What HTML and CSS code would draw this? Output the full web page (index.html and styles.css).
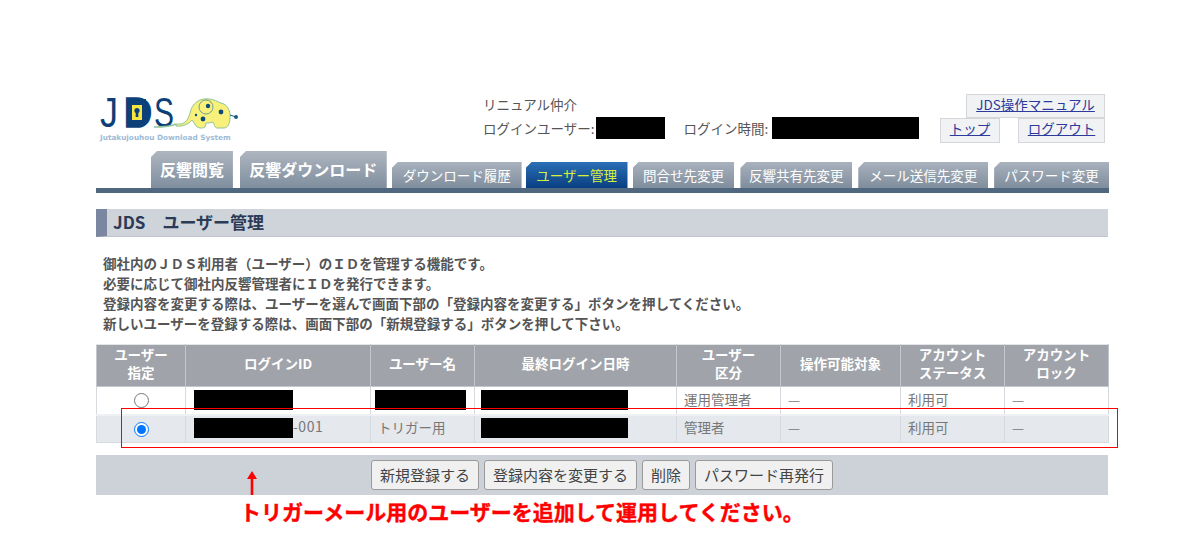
FILE: index.html
```html
<!DOCTYPE html>
<html lang="ja">
<head>
<meta charset="utf-8">
<title>JDS ユーザー管理</title>
<link rel="stylesheet" href="styles.css">
</head>
<body>
<div class="page">
  <header class="header">
    <div class="logo">
      <svg class="logo-mark" width="142" height="54" viewBox="0 -6 142 54">
        <text class="logo-thin" x="2" y="34" textLength="18" lengthAdjust="spacingAndGlyphs">J</text>
        <rect x="30" y="6" width="18" height="26" fill="#0d3f78"/>
        <text class="logo-bold" x="26" y="34" textLength="28" lengthAdjust="spacingAndGlyphs">D</text>
        <rect x="34" y="12" width="10" height="15" fill="#f5e642"/>
        <circle cx="39" cy="17.500" r="2.600" fill="#0d3f78"/>
        <rect x="37.700" y="17.500" width="2.600" height="6.500" fill="#0d3f78"/>
        <text class="logo-thin" x="56" y="34" textLength="20" lengthAdjust="spacingAndGlyphs">S</text>
        <path d="M56 34C66 34 74 33 78 31" fill="none" stroke="#8fc49c" stroke-width="1.500"/>
        <path d="M78 31C86 32 90 28 92 20C94 10 102 5 110 6C116 6 120 9 123 10C129 11 133 18 132 25C132 30 130 35 126 35L119 35C117 35 116 31 115 29C112 30 110 30 108 30L107 34C104 36 100 35 98 33C96 30 95 28 94 27C91 31 84 34 78 33Z" fill="#f7f07a" stroke="#8fc49c"/>
        <circle cx="108" cy="14" r="7" fill="none" stroke="#4f8a9a" stroke-width=".8"/>
        <path d="M132 22L138 24" stroke="#1d5a86" stroke-width="1"/>
        <circle cx="110" cy="13" r="2.200" fill="#0d4a78"/>
        <circle cx="123" cy="19" r="2.400" fill="#0d4a78"/>
        <circle cx="105" cy="26" r="2.400" fill="#0d4a78"/>
        <circle cx="98" cy="22" r="1.200" fill="#0d4a78"/>
        <circle cx="138" cy="24" r="2" fill="#1d5a86"/>
      </svg>
      <div class="logo-caption">Jutakujouhou Download System</div>
    </div>
    <div class="info">
      <div class="info-line">リニュアル仲介</div>
      <div class="info-line info-user">
        <span>ログインユーザー:</span><span class="mask mask-user"></span>
        <span class="info-time">ログイン時間:</span><span class="mask mask-time"></span>
      </div>
    </div>
    <nav class="links">
      <a class="link link-manual" href="#">JDS操作マニュアル</a>
      <div class="links-row">
        <a class="link link-top" href="#">トップ</a>
        <a class="link link-logout" href="#">ログアウト</a>
      </div>
    </nav>
  </header>

  <nav class="tabs">
    <a class="tab tab-big tab-w82" href="#">反響閲覧</a>
    <a class="tab tab-big tab-w147" href="#">反響ダウンロード</a>
    <a class="tab tab-w130" href="#">ダウンロード履歴</a>
    <a class="tab tab-w102 tab-active" href="#">ユーザー管理</a>
    <a class="tab tab-w102" href="#">問合せ先変更</a>
    <a class="tab tab-w112 tab-shift" href="#">反響共有先変更</a>
    <a class="tab tab-w130 tab-shift" href="#">メール送信先変更</a>
    <a class="tab tab-w115 tab-shift" href="#">パスワード変更</a>
  </nav>
  <div class="tab-rule"></div>

  <h1 class="title">JDS　ユーザー管理</h1>

  <div class="lead">
    <p>御社内のＪＤＳ利用者（ユーザー）のＩＤを管理する機能です。</p>
    <p>必要に応じて御社内反響管理者にＩＤを発行できます。</p>
    <p>登録内容を変更する際は、ユーザーを選んで画面下部の「登録内容を変更する」ボタンを押してください。</p>
    <p>新しいユーザーを登録する際は、画面下部の「新規登録する」ボタンを押して下さい。</p>
  </div>

  <table class="users">
    <colgroup>
      <col class="c1"><col class="c2"><col class="c3"><col class="c4"><col class="c5"><col class="c6"><col class="c7"><col class="c8">
    </colgroup>
    <thead>
      <tr>
        <th>ユーザー<br>指定</th><th>ログインID</th><th>ユーザー名</th><th>最終ログイン日時</th><th>ユーザー<br>区分</th><th>操作可能対象</th><th>アカウント<br>ステータス</th><th>アカウント<br>ロック</th>
      </tr>
    </thead>
    <tbody>
      <tr>
        <td class="cell-radio"><input type="radio" name="user"></td>
        <td class="cell-id"><span class="mask mask-id"></span></td>
        <td class="cell-name"><span class="mask mask-name"></span></td>
        <td class="cell-date"><span class="mask mask-date"></span></td>
        <td>運用管理者</td><td>—</td><td>利用可</td><td>—</td>
      </tr>
      <tr class="row-alt">
        <td class="cell-radio"><input type="radio" name="user" checked></td>
        <td class="cell-id"><span class="mask mask-id"></span><span class="suffix">-001</span></td>
        <td>トリガー用</td>
        <td class="cell-date"><span class="mask mask-date"></span></td>
        <td>管理者</td><td>—</td><td>利用可</td><td>—</td>
      </tr>
    </tbody>
  </table>

  <div class="actions">
    <button class="btn" type="button">新規登録する</button>
    <button class="btn" type="button">登録内容を変更する</button>
    <button class="btn" type="button">削除</button>
    <button class="btn" type="button">パスワード再発行</button>
  </div>

  <div class="highlight"></div>
  <svg class="arrow" width="12" height="24" viewBox="0 0 12 24"><path d="M6 0L11 8H7.300V24H4.700V8H1Z" fill="#f00"/></svg>
  <div class="note">トリガーメール用のユーザーを追加して運用してください。</div>
</div>
</body>
</html>
```

FILE: styles.css
```css
* { box-sizing: border-box; }
html, body { margin: 0; padding: 0; background: #fff; }
body {
  font-family: "Noto Sans CJK JP", "Noto Sans", sans-serif;
  color: #5a5a5a;
  overflow: hidden;
  text-spacing-trim: space-all;
}
.page { position: relative; width: 1013px; height: 546px; margin-left: 96px; }

.header { display: flex; height: 151px; padding: 87px 4px 0 2px; }
.logo { flex: none; width: 142px; }
.logo-mark { display: block; margin-bottom: -9px; }
.logo-thin { font: 400 42px "Liberation Sans", sans-serif; fill: #0d3f78; }
.logo-bold { font: 700 42px "Liberation Sans", sans-serif; fill: #0d3f78; stroke: #0d3f78; stroke-width: 1.500px; }
.logo-caption { margin: -1px 0 0 2px; font: 700 7.300px/11px "DejaVu Sans", sans-serif; color: #9dbcd8; white-space: nowrap; }

.info { margin-left: 243px; padding-top: 6px; font-size: 13.500px; color: #555; }
.info-line { height: 22px; line-height: 22px; }
.info-user { display: flex; align-items: center; margin-top: 2px; }
.info-time { margin-left: 18px; }

.mask { display: inline-block; background: #000; vertical-align: middle; }
.mask-user { width: 69px; height: 22px; margin-left: 2px; }
.mask-time { width: 147px; height: 22px; margin-left: 4px; }
.mask-id { width: 99px; height: 20px; }
.mask-name { width: 91px; height: 20px; }
.mask-date { width: 147px; height: 20px; }

.links { margin-left: auto; display: flex; flex-direction: column; align-items: flex-end; padding-top: 7px; }
.links-row { display: flex; gap: 18px; }
.link {
  display: block;
  height: 25px;
  line-height: 19px;
  text-align: center;
  font-size: 13.500px;
  color: #2b3a9c;
  background: #f1f2f4;
  border: 1px solid #d4d6da;
}
.link-manual { width: 139px; height: 24px; }
.link-top { width: 60px; }
.link-logout { width: 87px; }

.tabs { display: flex; align-items: flex-end; gap: 5px; height: 37px; padding-left: 55px; }
.tab {
  display: block;
  height: 26px;
  line-height: 27px;
  text-align: center;
  font-size: 13.500px;
  color: #fff;
  text-decoration: none;
  background: linear-gradient(#a9b2bd, #7f8d9c);
  clip-path: polygon(6px 0, 100% 0, 100% 100%, 0 100%, 0 6px);
}
.tab-big { height: 37px; line-height: 36px; font-size: 16px; font-weight: 700; background: linear-gradient(#aeb6c0, #7f8e9e); }
.tab-w82 { width: 82px; margin-right: 2px; }
.tab-w147 { width: 147px; }
.tab-w130 { width: 130px; }
.tab-w102 { width: 102px; }
.tab-w112 { width: 112px; }
.tab-w115 { width: 115px; }
.tab-shift { margin-left: 1px; }
.tab-active { background: linear-gradient(#2a6fb5, #0a3f82); color: #d7f03a; margin-left: -1px; }
.tab-rule { height: 5px; background: #4f6880; }

.title {
  height: 28px;
  margin: 16px 1px 0 0;
  padding-left: 6px;
  border-left: 11px solid #7b86a0;
  background: #cfd3da;
  border-bottom: 1px solid #c0c4cb;
  font-size: 17px;
  line-height: 25px;
  font-weight: 700;
  color: #2b3a55;
}

.lead { margin-top: 16px; padding-left: 7px; font-size: 13.500px; font-weight: 700; line-height: 20px; color: #555; white-space: nowrap; }
.lead p { margin: 0; height: 20px; }

.users { width: 1012px; margin-top: 11px; border-collapse: collapse; table-layout: fixed; font-size: 13.500px; }
.c1 { width: 89px; } .c2 { width: 185px; } .c3 { width: 104px; } .c4 { width: 202px; }
.c5 { width: 104px; } .c6 { width: 120px; } .c7 { width: 104px; } .c8 { width: 104px; }
.users th {
  height: 42px;
  padding: 0 0 5px;
  background: #a0a3a9;
  color: #fff;
  font-size: 13.500px;
  font-weight: 700;
  line-height: 18px;
  border: 1px solid #c3c6cb;
  border-top-color: #e4e5e7;
}
.users td {
  height: 28px;
  padding: 0 0 3px 7px;
  border: 1px solid #d6d9de;
  border-top: 0;
  border-bottom: 0;
  color: #777;
  white-space: nowrap;
  line-height: 20px;
}
.users tr.row-alt td { background: #e5e8ed; border-top: 2px solid #eef0f3; border-bottom: 1px solid #d6d9de; }
.users td.cell-radio { padding: 0 0 4px; text-align: center; }
.users td.cell-id { padding-left: 8px; }
.users td.cell-name { padding-left: 4px; }
.users td.cell-date { padding-left: 6px; }
.suffix { font-size: 14px; letter-spacing: .5px; }
.cell-radio input { width: 15px; height: 15px; margin: 0; vertical-align: middle; }

.actions {
  display: flex;
  justify-content: center;
  gap: 5px;
  width: 1012px;
  height: 40px;
  margin-top: 12px;
  padding: 5px 0 0 0;
  background: #cdd1d8;
}
.btn {
  height: 30px;
  padding: 0 8px;
  font-family: inherit;
  font-size: 15px;
  line-height: 20px;
  color: #444;
  background: #f0f0f0;
  border: 1px solid #9a9a9a;
  border-radius: 3px;
}

.highlight { position: absolute; left: 25px; top: 408px; width: 997px; height: 40px; border: 1px solid #f00; }
.arrow { position: absolute; left: 150px; top: 471px; }
.note { position: absolute; left: 144px; top: 495px; font-size: 21px; line-height: 32px; font-weight: 700; color: #f00; white-space: nowrap; -webkit-text-stroke: .4px #f00; }
```
